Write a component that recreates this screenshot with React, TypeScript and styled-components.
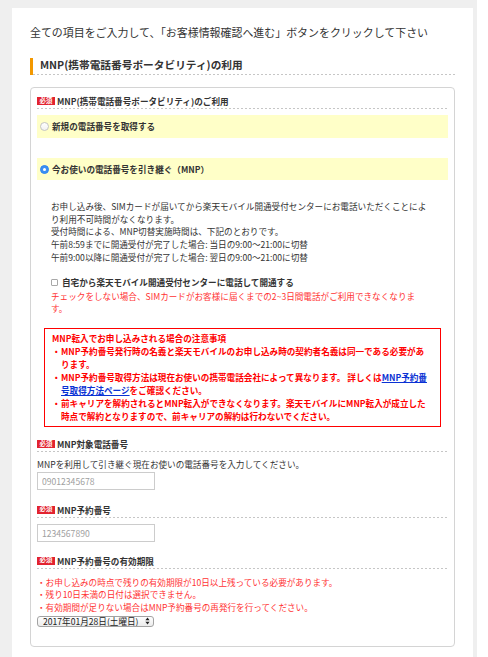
import React from 'react';
import styled, { createGlobalStyle, css } from 'styled-components';

const GlobalStyle = createGlobalStyle`
  html, body {
    margin: 0;
    padding: 0;
    background: #ffffff;
  }
  body {
    font-family: 'Noto Sans CJK JP', 'Noto Sans', sans-serif;
    color: #333333;
  }
`;

const dottedBottom = css`
  background-image: linear-gradient(to right, #c6c6c6 50%, transparent 50%);
  background-size: 4px 1px;
  background-repeat: repeat-x;
  background-position: left bottom;
`;

const App: React.FC = () => {
  return (
    <>
      <GlobalStyle />
      <StyledPage>
        <StyledPanel>
          <StyledLead>
            全ての項目をご入力して、「お客様情報確認へ進む」ボタンをクリックして下さい
          </StyledLead>

          <StyledSectionTitle>
            <StyledSectionTitleText>MNP(携帯電話番号ポータビリティ)の利用</StyledSectionTitleText>
          </StyledSectionTitle>

          <StyledCard>
            <StyledFieldLabel $mt={0}>
              <StyledBadge>必須</StyledBadge>
              MNP(携帯電話番号ポータビリティ)のご利用
            </StyledFieldLabel>

            <StyledChoiceRow $mt={6} $h={23}>
              <StyledRadio $checked={false} />
              新規の電話番号を取得する
            </StyledChoiceRow>
            <StyledChoiceRow $mt={20} $h={22}>
              <StyledRadio $checked />
              今お使いの電話番号を引き継ぐ（MNP）
            </StyledChoiceRow>

            <StyledInfo>
              お申し込み後、SIMカードが届いてから楽天モバイル開通受付センターにお電話いただくことによ
              <br />
              り利用不可時間がなくなります。
              <br />
              受付時間による、MNP切替実施時間は、下記のとおりです。
              <br />
              午前8:59までに開通受付が完了した場合: 当日の9:00〜21:00に切替
              <br />
              午前9:00以降に開通受付が完了した場合: 翌日の9:00〜21:00に切替
            </StyledInfo>

            <StyledCheckRow>
              <StyledCheckbox />
              自宅から楽天モバイル開通受付センターに電話して開通する
            </StyledCheckRow>
            <StyledWarn>
              チェックをしない場合、SIMカードがお客様に届くまでの2~3日間電話がご利用できなくなりま
              <br />
              す。
            </StyledWarn>

            <StyledNoticeBox>
              <StyledNoticeTitle>MNP転入でお申し込みされる場合の注意事項</StyledNoticeTitle>
              <StyledNoticeItem>
                <StyledBullet>・</StyledBullet>
                <span>
                  MNP予約番号発行時の名義と楽天モバイルのお申し込み時の契約者名義は同一である必要があ
                  <br />
                  ります。
                </span>
              </StyledNoticeItem>
              <StyledNoticeItem>
                <StyledBullet>・</StyledBullet>
                <span>
                  MNP予約番号取得方法は現在お使いの携帯電話会社によって異なります。 詳しくは
                  <StyledLink href="#">
                    MNP予約番
                    <br />
                    号取得方法ページ
                  </StyledLink>
                  をご確認ください。
                </span>
              </StyledNoticeItem>
              <StyledNoticeItem>
                <StyledBullet>・</StyledBullet>
                <span>
                  前キャリアを解約されるとMNP転入ができなくなります。楽天モバイルにMNP転入が成立した
                  <br />
                  時点で解約となりますので、前キャリアの解約は行わないでください。
                </span>
              </StyledNoticeItem>
            </StyledNoticeBox>

            <StyledFieldLabel $mt={11}>
              <StyledBadge>必須</StyledBadge>
              MNP対象電話番号
            </StyledFieldLabel>
            <StyledDesc>MNPを利用して引き継ぐ現在お使いの電話番号を入力してください。</StyledDesc>
            <StyledTextInput $mt={1} placeholder="09012345678" />

            <StyledFieldLabel $mt={14}>
              <StyledBadge>必須</StyledBadge>
              MNP予約番号
            </StyledFieldLabel>
            <StyledTextInput $mt={6} placeholder="1234567890" />

            <StyledFieldLabel $mt={13}>
              <StyledBadge>必須</StyledBadge>
              MNP予約番号の有効期限
            </StyledFieldLabel>
            <StyledDateNotes>
              ・お申し込みの時点で残りの有効期限が10日以上残っている必要があります。
              <br />
              ・残り10日未満の日付は選択できません。
              <br />
              ・有効期間が足りない場合はMNP予約番号の再発行を行ってください。
            </StyledDateNotes>
            <StyledSelectBox>
              <StyledSelect defaultValue="2017-01-28">
                <option value="2017-01-28">2017年01月28日(土曜日)</option>
              </StyledSelect>
              <svg width="5" height="8" viewBox="0 0 5 8">
                <path d="M2.5 0.5 L4.6 3.2 L0.4 3.2 Z" fill="#222" />
                <path d="M2.5 7.5 L4.6 4.8 L0.4 4.8 Z" fill="#222" />
              </svg>
            </StyledSelectBox>
          </StyledCard>
        </StyledPanel>
      </StyledPage>
    </>
  );
};

const StyledPage = styled.div`
  width: 477px;
  height: 657px;
  box-sizing: border-box;
  padding: 8px 4px 0 12px;
  background-color: #efefef;
  overflow: hidden;
`;

const StyledPanel = styled.div`
  height: 100%;
  box-sizing: border-box;
  background-color: #ffffff;
  padding: 17px 18px 0;
`;

const StyledLead = styled.p`
  margin: 0;
  font-size: 10.95px;
  line-height: 14px;
  color: #333333;
  white-space: nowrap;
`;

const StyledSectionTitle = styled.h2`
  margin: 19px 0 0;
  border-left: 3px solid #f39800;
  font-size: 10.7px;
  line-height: 14px;
  font-weight: bold;
  color: #333333;
`;

const StyledSectionTitleText = styled.span`
  display: block;
  padding: 0 0 3px 7px;
  ${dottedBottom};
`;

const StyledCard = styled.div`
  margin-top: 12px;
  border: 1px solid #d4d4d4;
  border-radius: 4px;
  padding: 7px 6px 19px;
  font-size: 8.6px;
  line-height: 12.7px;
`;

const StyledFieldLabel = styled.h3<{ $mt: number }>`
  display: flex;
  align-items: center;
  gap: 2px;
  margin: ${(p) => p.$mt}px 0 0;
  padding-bottom: 2px;
  font-size: 8.6px;
  line-height: 12px;
  font-weight: bold;
  color: #333333;
  ${dottedBottom};
`;

const StyledBadge = styled.span`
  display: inline-flex;
  align-items: center;
  justify-content: center;
  width: 18px;
  height: 8px;
  background-color: #e2232f;
  color: #ffffff;
  font-size: 6.4px;
  line-height: 1;
  font-weight: bold;
`;

const StyledChoiceRow = styled.label<{ $mt: number; $h: number }>`
  display: flex;
  align-items: center;
  gap: 3px;
  margin-top: ${(p) => p.$mt}px;
  height: ${(p) => p.$h}px;
  padding-left: 3px;
  background-color: #ffffc8;
  font-weight: bold;
  color: #333333;
`;

const StyledRadio = styled.span<{ $checked: boolean }>`
  position: relative;
  width: 9px;
  height: 9px;
  box-sizing: border-box;
  border-radius: 50%;
  border: 1px solid ${(p) => (p.$checked ? '#2f86f0' : '#c4c4c4')};
  background: ${(p) => (p.$checked ? '#3a8ff4' : 'linear-gradient(#ffffff, #f2f2f2)')};
  &::after {
    content: '';
    display: ${(p) => (p.$checked ? 'block' : 'none')};
    position: absolute;
    left: 50%;
    top: 50%;
    width: 3px;
    height: 3px;
    margin: -1.5px 0 0 -1.5px;
    border-radius: 50%;
    background-color: #ffffff;
  }
`;

const StyledInfo = styled.p`
  margin: 20px 0 0;
  padding: 0 14px;
  white-space: nowrap;
  color: #333333;
`;

const StyledCheckRow = styled.label`
  display: flex;
  align-items: center;
  gap: 4px;
  height: 14px;
  margin-top: 12px;
  padding-left: 14px;
  font-weight: bold;
  color: #333333;
`;

const StyledCheckbox = styled.span`
  width: 7px;
  height: 7px;
  box-sizing: border-box;
  border: 1px solid #a8a8a8;
  border-radius: 1px;
  background: #ffffff;
`;

const StyledWarn = styled.p`
  margin: 0;
  padding: 0 14px;
  color: #ff3333;
  white-space: nowrap;
`;

const StyledNoticeBox = styled.div`
  margin: 13px 7px 0;
  border: 1px solid #ff0000;
  padding: 3px 7px;
  color: #ff0000;
  font-weight: bold;
  line-height: 13px;
  white-space: nowrap;
`;

const StyledNoticeTitle = styled.div`
  font-weight: bold;
`;

const StyledNoticeItem = styled.div`
  display: flex;
`;

const StyledBullet = styled.span`
  flex: 0 0 9px;
  width: 9px;
  overflow: hidden;
`;

const StyledLink = styled.a`
  color: #0a32d4;
  text-decoration: underline;
`;

const StyledDesc = styled.p`
  margin: 6px 0 0;
  color: #333333;
`;

const StyledTextInput = styled.input<{ $mt: number }>`
  display: block;
  width: 118px;
  height: 18px;
  box-sizing: border-box;
  margin-top: ${(p) => p.$mt}px;
  padding: 0 4px;
  border: 1px solid #cccccc;
  border-radius: 0;
  font-family: inherit;
  font-size: 8.6px;
  color: #333333;
  outline: none;
  &::placeholder {
    color: #a0a0a0;
  }
`;

const StyledDateNotes = styled.p`
  margin: 7px 0 0;
  color: #ff3333;
  white-space: nowrap;
`;

const StyledSelectBox = styled.label`
  display: flex;
  align-items: center;
  width: 117px;
  height: 11px;
  box-sizing: border-box;
  margin-top: 2px;
  padding: 0 3px 0 5px;
  border: 1px solid #a3a3a3;
  border-radius: 3px;
  background: linear-gradient(#ffffff, #ececec);
`;

const StyledSelect = styled.select`
  flex: 1;
  min-width: 0;
  height: 9px;
  appearance: none;
  -webkit-appearance: none;
  border: 0;
  padding: 0;
  margin: 0;
  background: transparent;
  font-family: inherit;
  font-size: 8.6px;
  line-height: 9px;
  color: #222222;
  outline: none;
`;

export default App;
